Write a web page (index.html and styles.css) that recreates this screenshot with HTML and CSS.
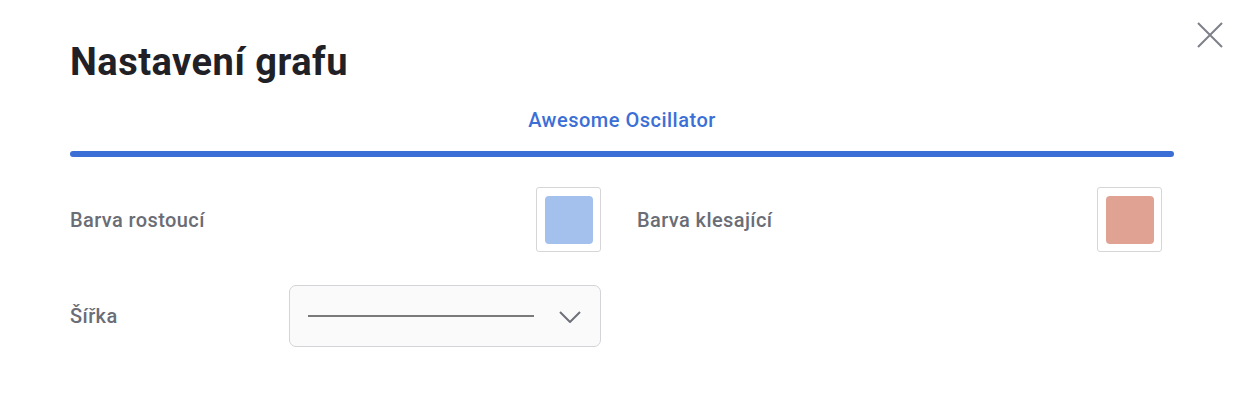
FILE: index.html
```html
<!DOCTYPE html>
<html lang="cs">
<head>
<meta charset="utf-8">
<title>Nastavení grafu</title>
<link rel="stylesheet" href="styles.css">
</head>
<body>
<div class="dialog">
  <button class="close" aria-label="Zavřít">
    <svg width="26" height="26" viewBox="0 0 26 26"><path d="M1 1L25 25M25 1L1 25" stroke="#7d8089" stroke-width="2" fill="none"/></svg>
  </button>
  <h1 class="title">Nastavení grafu</h1>
  <div class="tabs">
    <div class="tab">Awesome Oscillator</div>
    <div class="tab-bar"></div>
  </div>
  <div class="form">
    <div class="row">
      <div class="field field-left">
        <span class="label">Barva rostoucí</span>
        <div class="swatch"><div class="swatch-fill up"></div></div>
      </div>
      <div class="field field-right">
        <span class="label">Barva klesající</span>
        <div class="swatch"><div class="swatch-fill down"></div></div>
      </div>
    </div>
    <div class="row row-width">
      <div class="field field-left">
        <span class="label">Šířka</span>
        <div class="select">
          <div class="line"></div>
          <svg class="chev" width="22" height="12" viewBox="0 0 22 12"><path d="M1 1L11 11L21 1" stroke="#6e717a" stroke-width="2" fill="none"/></svg>
        </div>
      </div>
    </div>
  </div>
</div>
</body>
</html>
```
FILE: styles.css
```css
* { box-sizing: border-box; }
html, body { margin: 0; padding: 0; background: #fff; }
body {
  font-family: Roboto, "Noto Sans", Arial, sans-serif;
  width: 1246px;
  height: 418px;
  overflow: hidden;
}
.dialog {
  position: relative;
  padding: 38px 72px 0 70px;
}
.close {
  position: absolute;
  top: 22px;
  right: 23px;
  width: 26px;
  height: 26px;
  padding: 0;
  border: 0;
  background: none;
  display: flex;
}
.title {
  margin: 0;
  font-size: 38px;
  font-weight: 700;
  line-height: 48px;
  color: #1f2126;
  letter-spacing: 0.5px;
}
.tabs {
  margin-top: 21px;
  display: flex;
  flex-direction: column;
  align-items: center;
}
.tab {
  font-size: 20px;
  font-weight: 500;
  color: #3b6fd6;
  line-height: 26px;
  letter-spacing: 0.5px;
}
.tab-bar {
  margin-top: 18px;
  align-self: stretch;
  height: 6px;
  border-radius: 3px;
  background: #3b6fd6;
}
.form {
  margin-top: 30px;
  display: flex;
  flex-direction: column;
  gap: 33px;
}
.row {
  display: flex;
  gap: 36px;
}
.field {
  display: flex;
  align-items: center;
  justify-content: space-between;
}
.field-left { width: 531px; }
.field-right { width: 525px; }
.label {
  font-size: 20px;
  font-weight: 500;
  color: #6a6d76;
  letter-spacing: 0.4px;
}
.swatch {
  width: 65px;
  height: 65px;
  border: 1px solid #d6d6d9;
  border-radius: 3px;
  display: flex;
  align-items: center;
  justify-content: center;
}
.swatch-fill {
  width: 48px;
  height: 48px;
  border-radius: 4px;
}
.up { background: #a3c1ec; }
.down { background: #e0a393; }
.select {
  width: 312px;
  height: 62px;
  border: 1px solid #d3d3d8;
  border-radius: 7px;
  background: #fafafa;
  display: flex;
  align-items: center;
  padding: 0 19px 0 18px;
  gap: 25px;
}
.line {
  width: 226px;
  height: 2px;
  background: #7a7a7a;
}
.chev { flex: none; margin-top: 2px; }
```
